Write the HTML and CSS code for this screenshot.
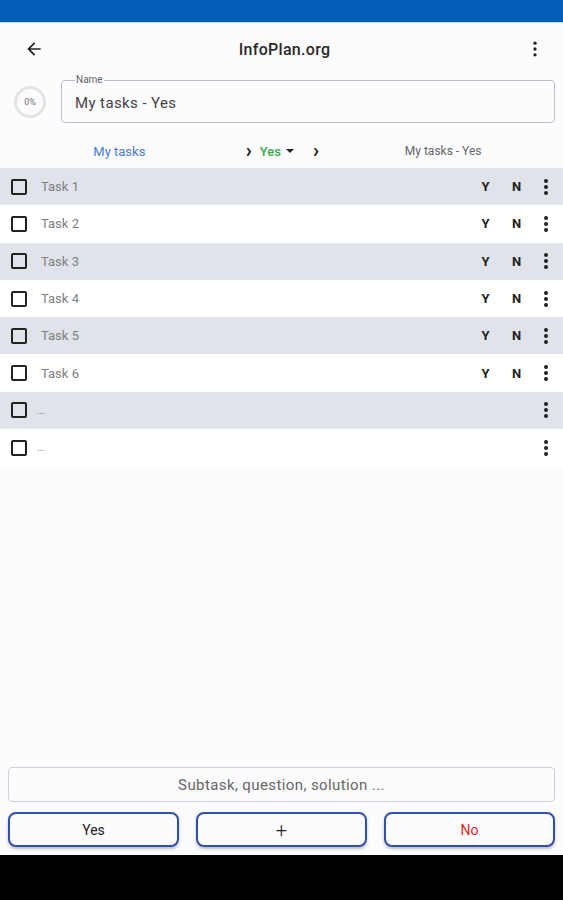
FILE: index.html
```html
<!DOCTYPE html>
<html lang="en">
<head>
    <meta charset="UTF-8">
    <meta name="viewport" content="width=device-width, initial-scale=1.0">
    <title>InfoPlan.org</title>
    <link rel="stylesheet" href="styles.css">
</head>
<body>
<div class="status-bar"></div>

<div class="app">
    <header class="toolbar">
        <button class="icon-btn" aria-label="Back">
            <svg width="20" height="20" viewBox="0 0 24 24"><path d="M20 11H7.83l5.59-5.59L12 4l-8 8 8 8 1.41-1.41L7.83 13H20v-2z" fill="#222"/></svg>
        </button>
        <div class="title">InfoPlan.org</div>
        <button class="icon-btn" aria-label="Menu">
            <svg width="20" height="20" viewBox="0 0 24 24"><circle cx="12" cy="5" r="2" fill="#222"/><circle cx="12" cy="12" r="2" fill="#222"/><circle cx="12" cy="19" r="2" fill="#222"/></svg>
        </button>
    </header>

    <div class="name-row">
        <div class="progress">0%</div>
        <fieldset class="name-field">
            <legend>Name</legend>
            <div class="name-value">My tasks - Yes</div>
        </fieldset>
    </div>

    <div class="crumbs">
        <span class="crumb-parent">My tasks</span>
        <span class="crumb-mid">
            <span class="chev">&#x203A;</span>
            <span class="crumb-yes">Yes</span>
            <svg width="10" height="10" viewBox="0 0 10 10"><path d="M1 3h8L5 7z" fill="#222"/></svg>
            <span class="chev chev-right">&#x203A;</span>
        </span>
        <span class="crumb-child">My tasks - Yes</span>
    </div>

    <ul class="tasks">
        <li class="task"><span class="box"></span><span class="task-name">Task 1</span><span class="yn">Y</span><span class="yn">N</span><span class="dots"></span></li>
        <li class="task"><span class="box"></span><span class="task-name">Task 2</span><span class="yn">Y</span><span class="yn">N</span><span class="dots"></span></li>
        <li class="task"><span class="box"></span><span class="task-name">Task 3</span><span class="yn">Y</span><span class="yn">N</span><span class="dots"></span></li>
        <li class="task"><span class="box"></span><span class="task-name">Task 4</span><span class="yn">Y</span><span class="yn">N</span><span class="dots"></span></li>
        <li class="task"><span class="box"></span><span class="task-name">Task 5</span><span class="yn">Y</span><span class="yn">N</span><span class="dots"></span></li>
        <li class="task"><span class="box"></span><span class="task-name">Task 6</span><span class="yn">Y</span><span class="yn">N</span><span class="dots"></span></li>
        <li class="task"><span class="box"></span><span class="task-name empty">...</span><span class="dots"></span></li>
        <li class="task"><span class="box"></span><span class="task-name empty">...</span><span class="dots"></span></li>
    </ul>

    <div class="bottom">
        <div class="new-input">Subtask, question, solution ...</div>
        <div class="actions">
            <button class="action">Yes</button>
            <button class="action plus">+</button>
            <button class="action no">No</button>
        </div>
    </div>
</div>

<div class="nav-bar"></div>
</body>
</html>
```

FILE: styles.css
```css
body {
    margin: 0;
    height: 900px;
    display: flex;
    flex-direction: column;
    font-family: Roboto, "Liberation Sans", sans-serif;
    background-color: #FCFBFE;
    color: #222;
}
.status-bar {
    height: 22px;
    background-color: #035DB9;
    border-bottom: 1px solid #C9D6F0;
}
.app {
    flex: 1;
    display: flex;
    flex-direction: column;
}
.nav-bar {
    height: 45px;
    background-color: #000;
}

.toolbar {
    display: flex;
    align-items: center;
    justify-content: space-between;
    height: 52px;
    padding: 0 18px 0 24px;
}
.icon-btn {
    background: none;
    border: none;
    padding: 0;
    width: 20px;
    height: 20px;
    display: flex;
}
.title {
    font-size: 16px;
    font-weight: 500;
    letter-spacing: 0.3px;
    color: #2a2a2a;
}

.name-row {
    display: flex;
    align-items: center;
    padding: 0 8px 0 14px;
    gap: 15px;
}
.progress {
    width: 32px;
    height: 32px;
    margin-top: 6px;
    border: 3px solid #E4E4E6;
    border-radius: 50%;
    box-sizing: border-box;
    display: flex;
    align-items: center;
    justify-content: center;
    font-size: 9px;
    color: #777;
    flex-shrink: 0;
}
.name-field {
    flex: 1;
    margin: 0;
    padding: 0 13px 9px;
    border: 1px solid #BDBDC2;
    border-radius: 4px;
    height: 48px;
    box-sizing: border-box;
}
.name-field legend {
    font-size: 10px;
    color: #666;
    padding: 0 1px;
    line-height: 10px;
}
.name-value {
    font-size: 15px;
    letter-spacing: 0.4px;
    color: #444;
    padding-top: 9px;
}

.crumbs {
    display: grid;
    grid-template-columns: 1fr 1fr 1fr;
    align-items: center;
    height: 34px;
    margin-top: 11px;
    font-size: 13px;
}
.crumb-parent {
    text-align: center;
    color: #4A7CD3;
    padding-left: 51px;
}
.crumb-mid {
    display: flex;
    align-items: center;
    gap: 4px;
    padding-left: 58px;
}
.chev {
    font-size: 20px;
    font-weight: 700;
    line-height: 14px;
    margin-top: -3px;
}
.chev-right {
    margin-left: 14px;
}
.crumb-yes {
    color: #3AA84A;
    font-weight: 500;
    margin-left: 4px;
}
.crumb-child {
    text-align: center;
    color: #666;
    font-size: 12px;
    padding-right: 52px;
    white-space: nowrap;
}

.tasks {
    list-style: none;
    margin: 0;
    padding: 0;
}
.task {
    display: flex;
    align-items: center;
    height: 37.3px;
    padding: 0 15px 0 11px;
    background-color: #FFFFFF;
}
.task:nth-child(odd) {
    background-color: #E1E3EA;
}
.box {
    width: 16px;
    height: 16px;
    border: 2px solid #222;
    border-radius: 2px;
    box-sizing: border-box;
    flex-shrink: 0;
}
.task-name {
    flex: 1;
    margin-left: 14px;
    font-size: 13px;
    color: #808080;
}
.task-name.empty {
    margin-left: 10px;
    font-size: 10px;
}
.yn {
    width: 31px;
    text-align: center;
    font-size: 13px;
    font-weight: 700;
    color: #222;
}
.dots {
    width: 4px;
    height: 4px;
    border-radius: 50%;
    background-color: #222;
    box-shadow: 0 -6px 0 #222, 0 6px 0 #222;
    margin: 0 0 0 12px;
}

.bottom {
    margin-top: auto;
    padding: 0 8px 8px;
}
.new-input {
    height: 35px;
    border: 1px solid #D0D0D4;
    border-radius: 4px;
    box-sizing: border-box;
    display: flex;
    align-items: center;
    justify-content: center;
    color: #666;
    font-size: 15px;
    letter-spacing: 0.4px;
    background-color: #FCFBFE;
}
.actions {
    display: grid;
    grid-template-columns: 1fr 1fr 1fr;
    gap: 17px;
    margin-top: 10px;
}
.action {
    height: 35px;
    border: 2px solid #2F51B0;
    border-radius: 8px;
    background-color: #FCFBFE;
    font-family: Roboto, "Liberation Sans", sans-serif;
    font-size: 14px;
    color: #222;
    box-shadow: 0 2px 3px rgba(0, 0, 0, 0.25);
}
.action.plus {
    font-size: 20px;
    font-weight: 300;
}
.action.no {
    color: #E0241B;
}
```
